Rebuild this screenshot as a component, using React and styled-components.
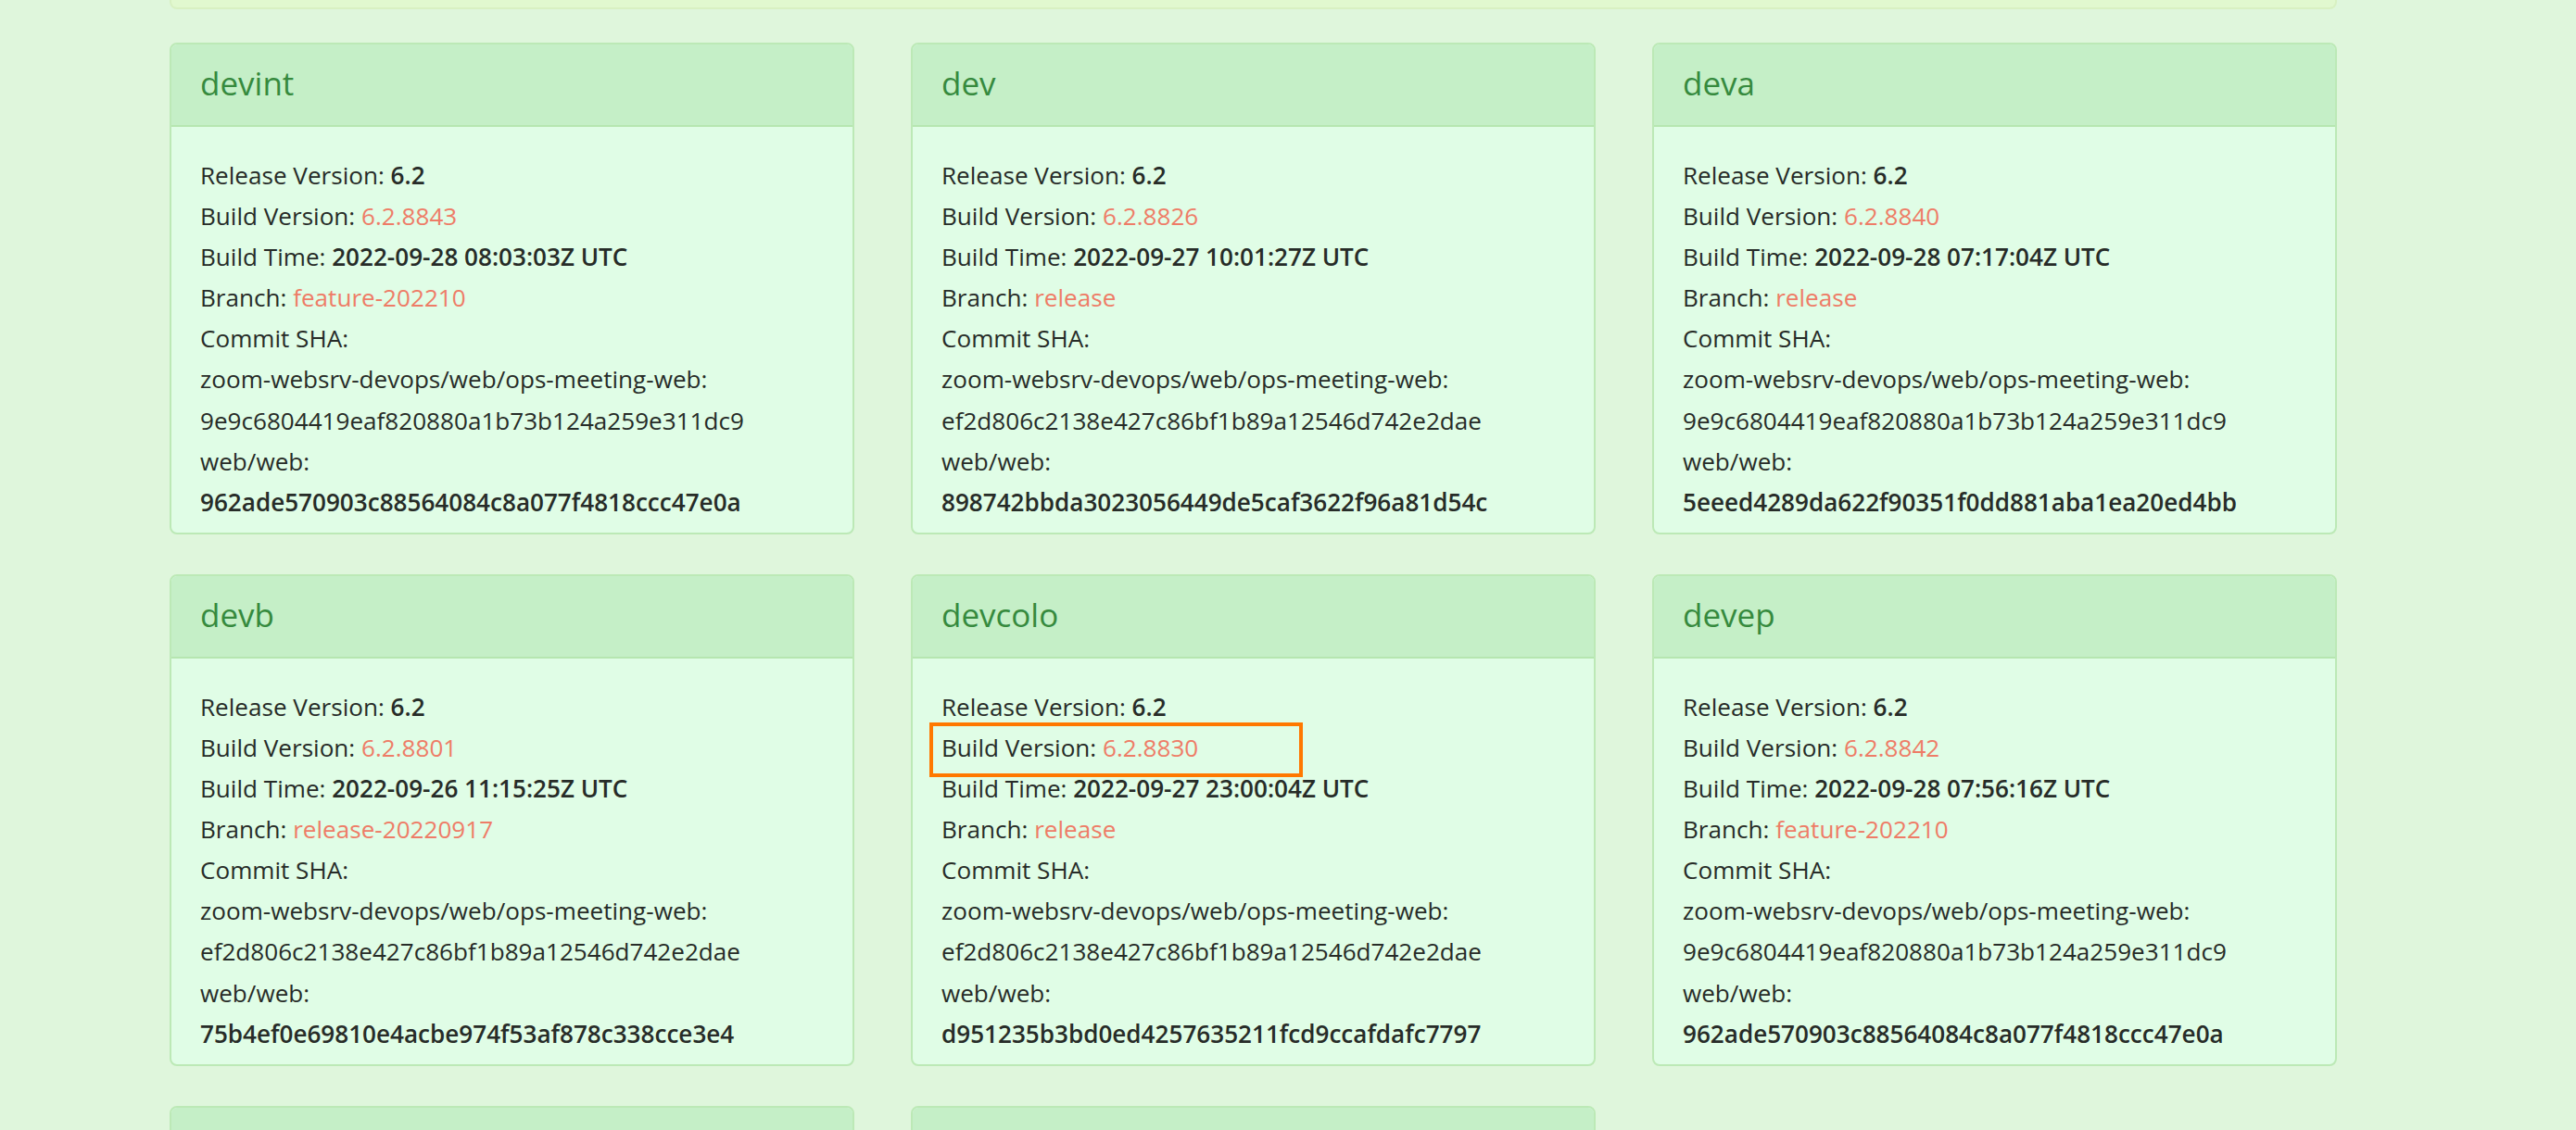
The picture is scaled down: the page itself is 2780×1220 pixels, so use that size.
import React from 'react';
import styled, { createGlobalStyle } from 'styled-components';

const GlobalStyle = createGlobalStyle`
  html, body {
    margin: 0;
    padding: 0;
    background: #dff6dc;
  }
  body {
    font-family: "Open Sans", "Noto Sans", sans-serif;
    color: #272c28;
    overflow: hidden;
  }
`;

const Page = styled.div`
  width: 2780px;
  height: 1220px;
  overflow: hidden;
  padding-left: 183px;
  box-sizing: border-box;
`;

const Container = styled.div`
  width: 2339px;
`;

const Banner = styled.div`
  height: 8px;
  background: #e1f8cf;
  border: 2px solid #d8f0c2;
  border-top: none;
  border-radius: 0 0 8px 8px;
  margin-bottom: 36px;
`;

const Grid = styled.div`
  display: grid;
  grid-template-columns: repeat(3, 739px);
  column-gap: 61px;
  row-gap: 43px;
`;

const Card = styled.div`
  background: #e0fde6;
  border: 2px solid #bce9b6;
  border-radius: 8px;
  overflow: hidden;
  min-height: ${p => (p.stub ? '120px' : 'auto')};
`;

const CardHeader = styled.div`
  background: #c5efc7;
  border-bottom: 2px solid #b6e6b0;
  padding: 21px 31px 24px;
  min-height: 42px;
`;

const Title = styled.h5`
  margin: 0;
  font-size: 35px;
  line-height: 42px;
  font-weight: 400;
  color: #368a3e;
`;

const CardBody = styled.div`
  padding: 30px 31px 11px;
  font-size: 26.1px;
  line-height: 44.1px;
`;

const Line = styled.div`
  position: relative;
  white-space: nowrap;
`;

const Value = styled.span`
  font-weight: ${p => (p.bold ? 600 : 400)};
  color: ${p => (p.accent ? '#ee7c67' : 'inherit')};
`;

const Highlight = styled.span`
  position: absolute;
  left: -13px;
  top: -5px;
  width: 403px;
  height: 59px;
  border: 4px solid #ff7800;
  box-sizing: border-box;
  pointer-events: none;
`;

const envs = [
  {
    name: 'devint',
    build: '6.2.8843',
    time: '2022-09-28 08:03:03Z UTC',
    branch: 'feature-202210',
    ops: '9e9c6804419eaf820880a1b73b124a259e311dc9',
    web: '962ade570903c88564084c8a077f4818ccc47e0a'
  },
  {
    name: 'dev',
    build: '6.2.8826',
    time: '2022-09-27 10:01:27Z UTC',
    branch: 'release',
    ops: 'ef2d806c2138e427c86bf1b89a12546d742e2dae',
    web: '898742bbda3023056449de5caf3622f96a81d54c'
  },
  {
    name: 'deva',
    build: '6.2.8840',
    time: '2022-09-28 07:17:04Z UTC',
    branch: 'release',
    ops: '9e9c6804419eaf820880a1b73b124a259e311dc9',
    web: '5eeed4289da622f90351f0dd881aba1ea20ed4bb'
  },
  {
    name: 'devb',
    build: '6.2.8801',
    time: '2022-09-26 11:15:25Z UTC',
    branch: 'release-20220917',
    ops: 'ef2d806c2138e427c86bf1b89a12546d742e2dae',
    web: '75b4ef0e69810e4acbe974f53af878c338cce3e4'
  },
  {
    name: 'devcolo',
    build: '6.2.8830',
    time: '2022-09-27 23:00:04Z UTC',
    branch: 'release',
    ops: 'ef2d806c2138e427c86bf1b89a12546d742e2dae',
    web: 'd951235b3bd0ed4257635211fcd9ccafdafc7797',
    marked: true
  },
  {
    name: 'devep',
    build: '6.2.8842',
    time: '2022-09-28 07:56:16Z UTC',
    branch: 'feature-202210',
    ops: '9e9c6804419eaf820880a1b73b124a259e311dc9',
    web: '962ade570903c88564084c8a077f4818ccc47e0a'
  }
];

// next row only peeks in at the bottom edge of the screen
const pending = ['next-1', 'next-2'];

const EnvCard = ({ env }) => (
  <Card>
    <CardHeader>
      <Title>{env.name}</Title>
    </CardHeader>
    <CardBody>
      <Line>
        Release Version: <Value bold>6.2</Value>
      </Line>
      <Line>
        Build Version: <Value accent>{env.build}</Value>
        {env.marked && <Highlight />}
      </Line>
      <Line>
        Build Time: <Value bold>{env.time}</Value>
      </Line>
      <Line>
        Branch: <Value accent>{env.branch}</Value>
      </Line>
      <Line>Commit SHA:</Line>
      <Line>zoom-websrv-devops/web/ops-meeting-web:</Line>
      <Line>{env.ops}</Line>
      <Line>web/web:</Line>
      <Line>
        <Value bold>{env.web}</Value>
      </Line>
    </CardBody>
  </Card>
);

const App = () => (
  <Page>
    <GlobalStyle />
    <Container>
      <Banner />
      <Grid>
        {envs.map(env => (
          <EnvCard key={env.name} env={env} />
        ))}
        {pending.map(key => (
          <Card key={key} stub>
            <CardHeader />
          </Card>
        ))}
      </Grid>
    </Container>
  </Page>
);

export default App;
